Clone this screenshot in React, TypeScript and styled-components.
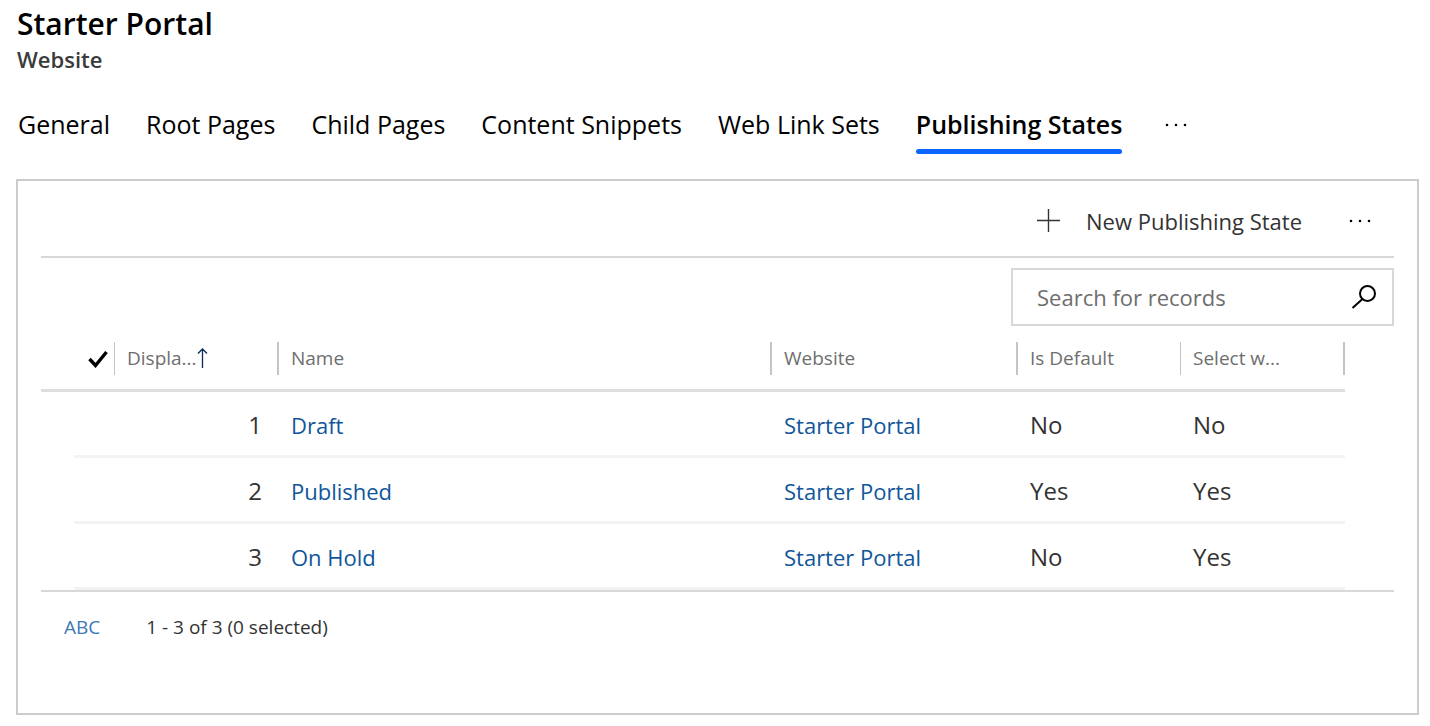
import React from "react";
import styled, { createGlobalStyle } from "styled-components";

const GlobalStyle = createGlobalStyle`
  * { box-sizing: border-box; }
  body {
    margin: 0;
    background: #fff;
    color: #333;
    font-family: "Open Sans", "Noto Sans", sans-serif;
  }
  button, input { font-family: inherit; }
  button {
    padding: 0;
    border: 0;
    background: none;
    color: inherit;
    cursor: pointer;
  }
  svg { display: block; flex: none; }
`;

const Page = styled.main`
  padding: 7px 11px 11px 16px;
`;

const Heading = styled.header`
  padding-left: 1px;
`;

const Title = styled.h1`
  margin: 0;
  color: #000;
  font-size: 30px;
  font-weight: 600;
  line-height: 34px;
`;

const Subtitle = styled.p`
  margin: 0;
  color: #3b3b3b;
  font-size: 22px;
  font-weight: 600;
  line-height: 37px;
`;

const Tabs = styled.nav`
  display: flex;
  align-items: flex-start;
  gap: 36px;
  padding: 28px 0 25px 2px;
`;

const Tab = styled.button<{ $active?: boolean }>`
  padding: 0 0 7px;
  border-bottom: 5px solid transparent;
  color: #000;
  font-size: 25px;
  font-weight: ${(p) => (p.$active ? 600 : 400)};
  line-height: 36px;
  white-space: nowrap;
  position: relative;

  &::after {
    content: "";
    position: absolute;
    left: 0;
    right: 0;
    bottom: -5px;
    height: 5px;
    border-radius: 3px;
    background: ${(p) => (p.$active ? "#0b66ff" : "transparent")};
  }
`;

const MoreButton = styled.button`
  display: flex;
  align-items: center;
  justify-content: center;
  width: 36px;
  height: 38px;
`;

const Panel = styled.section`
  border: 2px solid #ccc;
  padding: 0 23px 51px;
`;

const Toolbar = styled.div`
  display: flex;
  align-items: center;
  justify-content: flex-end;
  gap: 40px;
  height: 77px;
  padding: 5px 16px 0 0;
  border-bottom: 2px solid #d8d8d8;
`;

const CommandButton = styled.button`
  display: flex;
  align-items: center;
  gap: 26px;
  font-size: 22px;
  line-height: 32px;
  white-space: nowrap;
`;

const SearchForm = styled.form`
  display: flex;
  align-items: center;
  width: 383px;
  height: 58px;
  margin: 10px 0 0 auto;
  padding: 0 15px 0 24px;
  border: 2px solid #d8d8d8;
`;

const SearchInput = styled.input`
  flex: 1;
  min-width: 0;
  padding: 0;
  border: 0;
  outline: 0;
  color: #333;
  font-size: 22px;
  line-height: 32px;

  &::placeholder { color: #6e6e6e; opacity: 1; }
`;

const GridArea = styled.div`
  padding-right: 49px;
`;

const Grid = styled.table`
  width: 100%;
  table-layout: fixed;
  border-collapse: separate;
  border-spacing: 0;
`;

const Column = styled.col<{ $width?: number }>`
  width: ${(p) => (p.$width ? `${p.$width}px` : "auto")};
`;

const HeadCell = styled.th`
  height: 66px;
  padding: 16px 0 14px;
  border-bottom: 3px solid #dedede;
  text-align: left;
`;

const HeadButton = styled.button<{ $line: number; $end?: boolean }>`
  display: flex;
  align-items: center;
  justify-content: ${(p) => (p.$end ? "flex-end" : "flex-start")};
  width: 100%;
  height: 33px;
  padding: 0 ${(p) => (p.$end ? 6 : 0)}px 0 12px;
  border-right: ${(p) => p.$line}px solid #c4c4c4;
  color: #6e6e6e;
  font-size: 19px;
  line-height: 35px;
  white-space: nowrap;
`;

const Cell = styled.td<{ $right?: boolean }>`
  height: 66px;
  padding: 2px ${(p) => (p.$right ? 17 : 0)}px 0 12px;
  border-bottom: 3px solid #f3f3f3;
  font-size: 24px;
  line-height: 36px;
  text-align: ${(p) => (p.$right ? "right" : "left")};
`;

const Gutter = styled.td`
  padding: 0;
`;

const RecordLink = styled.a`
  color: #10569a;
  font-size: 22px;
  text-decoration: none;
`;

const Footer = styled.footer`
  display: flex;
  align-items: center;
  gap: 46px;
  padding: 21px 23px;
  border-top: 2px solid #d8d8d8;
  font-size: 19px;
  line-height: 28px;
`;

const JumpButton = styled.button`
  color: #3b79b7;
  font-size: 19px;
  line-height: 28px;
`;

const MoreIcon = () => (
  <svg width="22" height="4" viewBox="0 0 22 4" aria-hidden="true">
    <circle cx="2" cy="2" r="1.3" />
    <circle cx="11" cy="2" r="1.3" />
    <circle cx="20" cy="2" r="1.3" />
  </svg>
);

const PlusIcon = () => (
  <svg width="24" height="24" viewBox="0 0 24 24" aria-hidden="true">
    <path d="M12.5 0v23M1 11.5h23" fill="none" stroke="#333" strokeWidth="1.4" />
  </svg>
);

const SearchIcon = () => (
  <svg width="26" height="26" viewBox="0 0 26 26" aria-hidden="true">
    <circle cx="16.5" cy="9.5" r="7.5" fill="none" stroke="#000" strokeWidth="2" />
    <path d="M11.5 15L1.5 24" fill="none" stroke="#000" strokeWidth="2" />
  </svg>
);

const CheckIcon = () => (
  <svg width="20" height="18" viewBox="0 0 20 18" aria-hidden="true">
    <path d="M1.5 9l6 6.5L18.5 2" fill="none" stroke="#000" strokeWidth="3.4" />
  </svg>
);

const SortIcon = () => (
  <svg width="11" height="21" viewBox="0 0 11 21" aria-hidden="true">
    <path d="M5.5 20V1M1 5.5L5.5 1L10 5.5" fill="none" stroke="#0b2a55" strokeWidth="1.3" />
  </svg>
);

const tabs = [
  "General",
  "Root Pages",
  "Child Pages",
  "Content Snippets",
  "Web Link Sets",
  "Publishing States",
];

const records = [
  { order: 1, name: "Draft", website: "Starter Portal", isDefault: "No", visible: "No" },
  { order: 2, name: "Published", website: "Starter Portal", isDefault: "Yes", visible: "Yes" },
  { order: 3, name: "On Hold", website: "Starter Portal", isDefault: "No", visible: "Yes" },
];

export default function App() {
  return (
    <Page>
      <GlobalStyle />
      <Heading>
        <Title>Starter Portal</Title>
        <Subtitle>Website</Subtitle>
      </Heading>
      <Tabs>
        {tabs.map((tab) => (
          <Tab key={tab} $active={tab === "Publishing States"}>
            {tab}
          </Tab>
        ))}
        <MoreButton aria-label="More tabs">
          <MoreIcon />
        </MoreButton>
      </Tabs>
      <Panel>
        <Toolbar>
          <CommandButton>
            <PlusIcon />
            New Publishing State
          </CommandButton>
          <MoreButton aria-label="More commands">
            <MoreIcon />
          </MoreButton>
        </Toolbar>
        <SearchForm role="search" onSubmit={(e) => e.preventDefault()}>
          <SearchInput aria-label="Search for records" placeholder="Search for records" />
          <button type="submit" aria-label="Search">
            <SearchIcon />
          </button>
        </SearchForm>
        <GridArea>
          <Grid>
            <colgroup>
              <Column $width={33} />
              <Column $width={41} />
              <Column $width={164} />
              <Column />
              <Column $width={246} />
              <Column $width={163} />
              <Column $width={164} />
            </colgroup>
            <thead>
              <tr>
                <HeadCell />
                <HeadCell>
                  <HeadButton $line={1} $end aria-label="Select all">
                    <CheckIcon />
                  </HeadButton>
                </HeadCell>
                <HeadCell>
                  <HeadButton $line={2}>
                    Displa...
                    <SortIcon />
                  </HeadButton>
                </HeadCell>
                <HeadCell>
                  <HeadButton $line={2}>Name</HeadButton>
                </HeadCell>
                <HeadCell>
                  <HeadButton $line={2}>Website</HeadButton>
                </HeadCell>
                <HeadCell>
                  <HeadButton $line={1}>Is Default</HeadButton>
                </HeadCell>
                <HeadCell>
                  <HeadButton $line={2}>Select w...</HeadButton>
                </HeadCell>
              </tr>
            </thead>
            <tbody>
              {records.map((r) => (
                <tr key={r.order}>
                  <Gutter />
                  <Cell />
                  <Cell $right>{r.order}</Cell>
                  <Cell>
                    <RecordLink href="#">{r.name}</RecordLink>
                  </Cell>
                  <Cell>
                    <RecordLink href="#">{r.website}</RecordLink>
                  </Cell>
                  <Cell>{r.isDefault}</Cell>
                  <Cell>{r.visible}</Cell>
                </tr>
              ))}
            </tbody>
          </Grid>
        </GridArea>
        <Footer>
          <JumpButton>ABC</JumpButton>
          <span>1 - 3 of 3 (0 selected)</span>
        </Footer>
      </Panel>
    </Page>
  );
}
